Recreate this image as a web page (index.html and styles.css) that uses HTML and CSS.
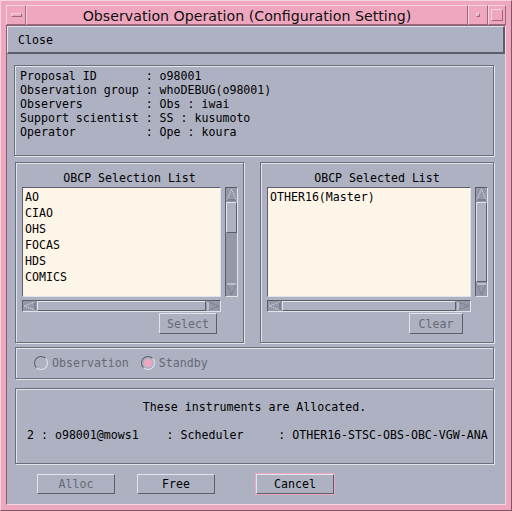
FILE: index.html
```html
<!DOCTYPE html>
<html lang="en">
<head>
  <meta charset="UTF-8" />
  <title>Observation Operation (Configuration Setting)</title>
  <link rel="stylesheet" href="styles.css">
</head>
<body>
  <div class="window">
    <!-- Заголовок окна (рамка оконного менеджера) -->
    <div class="titlebar">
      <div class="tb-btn menu-btn"><span class="menu-bar"></span></div>
      <div class="tb-title">Observation Operation (Configuration Setting)</div>
      <div class="tb-btn min-btn"><span class="min-dot"></span></div>
      <div class="tb-btn max-btn"><span class="max-box"></span></div>
    </div>

    <div class="client">
      <div class="menubar"><span class="menu-item">Close</span></div>

      <div class="content">
        <div class="frame info">
<pre>Proposal ID       : o98001
Observation group : whoDEBUG(o98001)
Observers         : Obs : iwai
Support scientist : SS : kusumoto
Operator          : Ope : koura</pre>
        </div>

        <div class="lists">
          <div class="frame list-panel left-panel">
            <div class="list-title">OBCP Selection List</div>
            <div class="list-row">
              <div class="listbox">
                <div class="item">AO</div>
                <div class="item">CIAO</div>
                <div class="item">OHS</div>
                <div class="item">FOCAS</div>
                <div class="item">HDS</div>
                <div class="item">COMICS</div>
              </div>
              <div class="vscroll">
                <div class="arrow"><svg width="11" height="13"><polyline points="1,12 5.5,1 10,12" fill="none" stroke="#e4e6ee" stroke-dasharray="1 1"/><line x1="1" y1="12" x2="10" y2="12" stroke="#6a6c78"/></svg></div>
                <div class="v-slider short"></div>
                <div class="v-trough"></div>
                <div class="arrow"><svg width="11" height="13"><polyline points="1,1 5.5,12 10,1" fill="none" stroke="#6a6c78" stroke-dasharray="1 1"/><line x1="1" y1="1" x2="10" y2="1" stroke="#e4e6ee"/></svg></div>
              </div>
            </div>
            <div class="hscroll">
              <div class="harrow"><svg width="13" height="10"><polyline points="12,1 1,5 12,9" fill="none" stroke="#e4e6ee" stroke-dasharray="1 1"/><line x1="12" y1="1" x2="12" y2="9" stroke="#6a6c78"/></svg></div>
              <div class="h-slider"></div>
              <div class="harrow"><svg width="13" height="10"><polyline points="1,1 12,5 1,9" fill="none" stroke="#6a6c78" stroke-dasharray="1 1"/><line x1="1" y1="1" x2="1" y2="9" stroke="#e4e6ee"/></svg></div>
            </div>
            <div class="btn-row"><div class="btn small select-btn disabled">Select</div></div>
          </div>

          <div class="frame list-panel right-panel">
            <div class="list-title">OBCP Selected List</div>
            <div class="list-row">
              <div class="listbox">
                <div class="item">OTHER16(Master)</div>
              </div>
              <div class="vscroll">
                <div class="arrow"><svg width="11" height="13"><polyline points="1,12 5.5,1 10,12" fill="none" stroke="#e4e6ee" stroke-dasharray="1 1"/><line x1="1" y1="12" x2="10" y2="12" stroke="#6a6c78"/></svg></div>
                <div class="v-slider full"></div>
                <div class="arrow"><svg width="11" height="13"><polyline points="1,1 5.5,12 10,1" fill="none" stroke="#6a6c78" stroke-dasharray="1 1"/><line x1="1" y1="1" x2="10" y2="1" stroke="#e4e6ee"/></svg></div>
              </div>
            </div>
            <div class="hscroll">
              <div class="harrow"><svg width="13" height="10"><polyline points="12,1 1,5 12,9" fill="none" stroke="#e4e6ee" stroke-dasharray="1 1"/><line x1="12" y1="1" x2="12" y2="9" stroke="#6a6c78"/></svg></div>
              <div class="h-slider"></div>
              <div class="harrow"><svg width="13" height="10"><polyline points="1,1 12,5 1,9" fill="none" stroke="#6a6c78" stroke-dasharray="1 1"/><line x1="1" y1="1" x2="1" y2="9" stroke="#e4e6ee"/></svg></div>
            </div>
            <div class="btn-row"><div class="btn small clear-btn disabled">Clear</div></div>
          </div>
        </div>

        <div class="frame radios">
          <div class="radio"><span class="circle"></span><span class="disabled-text">Observation</span></div>
          <div class="radio"><span class="circle on"></span><span class="disabled-text">Standby</span></div>
        </div>

        <div class="frame alloc">
          <div class="alloc-title">These instruments are Allocated.</div>
          <pre class="alloc-line">2 : o98001@mows1    : Scheduler     : OTHER16-STSC-OBS-OBC-VGW-ANA</pre>
        </div>

        <div class="actions">
          <div class="btn action disabled">Alloc</div>
          <div class="btn action free-btn">Free</div>
          <div class="default-ring"><div class="btn action">Cancel</div></div>
        </div>
      </div>
    </div>
  </div>
</body>
</html>
```

FILE: styles.css
```css
body {
  margin: 0;
  background-color: #eea7bf;
  font-family: "DejaVu Sans Mono", "Liberation Mono", monospace;
  font-size: 11.6px;
  color: #000000;
}

pre {
  margin: 0;
  font-family: inherit;
  font-size: inherit;
}

/* ---------- Рамка окна ---------- */
.window {
  width: 512px;
  height: 511px;
  box-sizing: border-box;
  display: flex;
  flex-direction: column;
  padding: 4px 5px 5px 5px;
  background-color: #eea7bf;
  border: 1px solid;
  border-color: #f8d4e0 #7e5565 #7e5565 #f8d4e0;
}

.titlebar {
  height: 20px;
  display: flex;
}

.tb-btn, .tb-title {
  box-sizing: border-box;
  border: 1px solid;
  border-color: #f8d4e0 #9a6a7c #9a6a7c #f8d4e0;
  display: flex;
  align-items: center;
  justify-content: center;
}

.menu-btn { width: 20px; }
.min-btn { width: 20px; }
.max-btn { width: 18px; }

.tb-title {
  flex: 1;
  font-family: "DejaVu Sans", sans-serif;
  font-size: 14.2px;
  color: #111111;
  padding-top: 1px;
}

.menu-bar {
  width: 9px;
  height: 2px;
  border: 1px solid;
  border-color: #f8d4e0 #9a6a7c #9a6a7c #f8d4e0;
}

.min-dot {
  width: 2px;
  height: 2px;
  border: 1px solid;
  border-color: #f8d4e0 #9a6a7c #9a6a7c #f8d4e0;
}

.max-box {
  width: 10px;
  height: 10px;
  border: 1px solid;
  border-color: #f8d4e0 #9a6a7c #9a6a7c #f8d4e0;
}

/* ---------- Клиентская область ---------- */
.client {
  flex: 1;
  background-color: #adb1c2;
  border: 1px solid;
  border-color: #8a6070 #f8d4e0 #f8d4e0 #8a6070;
  display: flex;
  flex-direction: column;
}

.menubar {
  height: 28px;
  box-sizing: border-box;
  border-top: 1px solid #e2e4ec;
  border-left: 1px solid #e2e4ec;
  border-bottom: 2px solid #5c5e6a;
  border-right: 2px solid #5c5e6a;
  display: flex;
  align-items: center;
  padding-left: 10px;
}

.content {
  display: flex;
  flex-direction: column;
  padding: 11px 9px 0 7px;
}

.frame {
  box-sizing: border-box;
  border: 1px solid #6c6e7a;
  box-shadow: inset 1px 1px 0 #e2e4ec, 1px 1px 0 #e2e4ec;
}

.info {
  width: 480px;
  height: 91px;
  padding: 3px 0 0 5px;
  line-height: 14px;
}

/* ---------- Списки ---------- */
.lists {
  display: flex;
  gap: 16px;
  margin-top: 6px;
  margin-left: 1px;
}

.list-panel {
  height: 181px;
  padding: 7px 0 0 6px;
}

.left-panel { width: 229px; }
.right-panel { width: 234px; }

.list-title {
  line-height: 16px;
  text-align: center;
  padding-right: 6px;
}

.list-row {
  display: flex;
  gap: 4px;
  margin-top: 1px;
}

.listbox {
  box-sizing: border-box;
  height: 110px;
  background-color: #fdf5e8;
  border: 1px solid;
  border-color: #5c5e6a #e2e4ec #e2e4ec #5c5e6a;
  padding: 1px 0 0 2px;
  line-height: 16px;
}

.left-panel .listbox { width: 199px; }
.right-panel .listbox { width: 204px; }

.vscroll {
  box-sizing: border-box;
  width: 13px;
  height: 110px;
  background-color: #9598a8;
  border: 1px solid;
  border-color: #5c5e6a #e2e4ec #e2e4ec #5c5e6a;
  display: flex;
  flex-direction: column;
}

.arrow {
  height: 13px;
  display: flex;
  justify-content: center;
}

.v-slider {
  box-sizing: border-box;
  background-color: #adb1c2;
  border: 1px solid;
  border-color: #e2e4ec #5c5e6a #5c5e6a #e2e4ec;
  margin-top: 1px;
}

.v-slider.short { height: 31px; }
.v-slider.full { flex: 1; margin-bottom: 1px; }

.v-trough { flex: 1; }

.hscroll {
  box-sizing: border-box;
  height: 12px;
  margin-top: 3px;
  background-color: #9598a8;
  border: 1px solid;
  border-color: #5c5e6a #e2e4ec #e2e4ec #5c5e6a;
  display: flex;
}

.left-panel .hscroll { width: 199px; }
.right-panel .hscroll { width: 204px; }

.harrow {
  width: 13px;
  display: flex;
  align-items: center;
}

.h-slider {
  flex: 1;
  background-color: #adb1c2;
  border: 1px solid;
  border-color: #e2e4ec #5c5e6a #5c5e6a #e2e4ec;
  margin: 0 1px;
}

.btn-row {
  display: flex;
  margin-top: 1px;
}

/* ---------- Кнопки ---------- */
.btn {
  box-sizing: border-box;
  height: 21px;
  display: flex;
  align-items: center;
  justify-content: center;
  background-color: #adb1c2;
  border: 1px solid;
  border-color: #e2e4ec #5c5e6a #5c5e6a #e2e4ec;
}

.small { height: 21px; }
.select-btn { width: 58px; margin-left: 137px; }
.clear-btn { width: 54px; margin-left: 142px; }

.disabled, .disabled-text {
  color: #676976;
}

/* ---------- Радиокнопки ---------- */
.radios {
  width: 479px;
  height: 32px;
  margin-top: 4px;
  margin-left: 1px;
  display: flex;
  align-items: center;
  gap: 12px;
  padding-left: 18px;
}

.radio {
  display: flex;
  align-items: center;
  gap: 4px;
}

.circle {
  width: 14px;
  height: 14px;
  box-sizing: border-box;
  border-radius: 50%;
  border: 1px solid;
  border-color: #5c5e6a #e2e4ec #e2e4ec #5c5e6a;
  display: flex;
  align-items: center;
  justify-content: center;
}

.circle.on::after {
  content: '';
  width: 8px;
  height: 8px;
  border-radius: 50%;
  background-color: #eea7bf;
}

/* ---------- Распределённые инструменты ---------- */
.alloc {
  width: 479px;
  height: 76px;
  margin-top: 9px;
  margin-left: 1px;
  padding: 10px 0 0 11px;
}

.alloc-title {
  text-align: center;
  line-height: 16px;
  padding-right: 11px;
}

.alloc-line {
  margin-top: 12px;
  line-height: 16px;
}

.actions {
  display: flex;
  align-items: center;
  margin-top: 9px;
  padding-left: 23px;
}

.action {
  width: 78px;
  height: 20px;
}

.free-btn { margin-left: 22px; }

.default-ring {
  margin-left: 40px;
  border: 1px solid #eea7bf;
}
```
